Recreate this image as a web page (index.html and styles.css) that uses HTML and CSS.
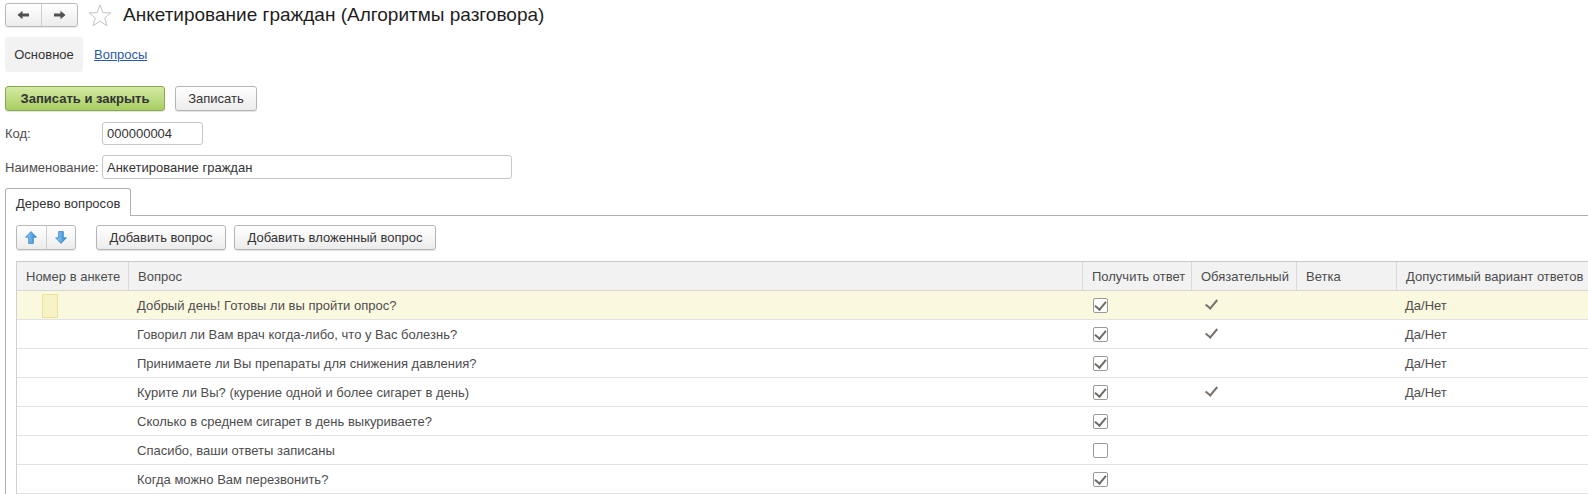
FILE: index.html
```html
<!DOCTYPE html>
<html lang="ru">
<head>
<meta charset="utf-8">
<title>Анкетирование граждан</title>
<link rel="stylesheet" href="styles.css">
</head>
<body>
<div class="page">
  <header class="titlebar">
    <div class="navgroup">
      <button class="navbtn" type="button">
        <svg width="13" height="10" viewBox="0 0 13 10"><path d="M0.5 5 L5.5 0.8 L5.5 3.6 L12 3.6 L12 6.4 L5.5 6.4 L5.5 9.2 Z" fill="#505050"/></svg>
      </button>
      <button class="navbtn" type="button">
        <svg width="13" height="10" viewBox="0 0 13 10"><path d="M12.5 5 L7.5 0.8 L7.5 3.6 L1 3.6 L1 6.4 L7.5 6.4 L7.5 9.2 Z" fill="#505050"/></svg>
      </button>
    </div>
    <svg class="star" width="24" height="23" viewBox="0 0 24 23"><polygon points="12,1 14.9,8.6 23,8.9 16.6,13.9 18.9,21.8 12,17.2 5.1,21.8 7.4,13.9 1,8.9 9.1,8.6" fill="#fff" stroke="#c4c4c4" stroke-width="1"/></svg>
    <h1 class="title">Анкетирование граждан (Алгоритмы разговора)</h1>
  </header>

  <nav class="sections">
    <span class="section active">Основное</span>
    <a class="section link" href="#">Вопросы</a>
  </nav>

  <div class="commands">
    <button class="btn primary" type="button">Записать и закрыть</button>
    <button class="btn plain" type="button">Записать</button>
  </div>

  <div class="field code-field">
    <span class="label">Код:</span>
    <div class="input code">000000004</div>
  </div>
  <div class="field name-field">
    <span class="label">Наименование:</span>
    <div class="input name">Анкетирование граждан</div>
  </div>

  <div class="tabs">
    <div class="tab">Дерево вопросов</div>
    <div class="tab-rest"></div>
  </div>

  <div class="panel">
    <div class="toolbar">
      <div class="arrows">
        <button class="arrowbtn" type="button">
          <svg width="12" height="13" viewBox="0 0 12 13"><defs><linearGradient id="gu" x1="0" y1="0" x2="1" y2="0"><stop offset="0" stop-color="#9fd3f7"/><stop offset="1" stop-color="#2a84d4"/></linearGradient></defs><polygon points="6,0.6 11.4,6.2 8.3,6.2 8.3,12.4 3.7,12.4 3.7,6.2 0.6,6.2" fill="url(#gu)" stroke="#2f80c8" stroke-width="0.8"/></svg>
        </button>
        <button class="arrowbtn" type="button">
          <svg width="12" height="13" viewBox="0 0 12 13"><defs><linearGradient id="gd" x1="0" y1="0" x2="1" y2="0"><stop offset="0" stop-color="#9fd3f7"/><stop offset="1" stop-color="#2a84d4"/></linearGradient></defs><polygon points="6,12.4 11.4,6.8 8.3,6.8 8.3,0.6 3.7,0.6 3.7,6.8 0.6,6.8" fill="url(#gd)" stroke="#2f80c8" stroke-width="0.8"/></svg>
        </button>
      </div>
      <button class="btn plain add" type="button">Добавить вопрос</button>
      <button class="btn plain add-nested" type="button">Добавить вложенный вопрос</button>
    </div>

    <div class="grid">
      <div class="row head">
        <div class="cell c-num">Номер в анкете</div>
        <div class="cell c-q">Вопрос</div>
        <div class="cell c-get">Получить ответ</div>
        <div class="cell c-req">Обязательный</div>
        <div class="cell c-br">Ветка</div>
        <div class="cell c-ans">Допустимый вариант ответов</div>
      </div>

      <div class="row current">
        <div class="cell c-num"><span class="edit-box"></span></div>
        <div class="cell c-q">Добрый день! Готовы ли вы пройти опрос?</div>
        <div class="cell c-get"><span class="cb on"></span></div>
        <div class="cell c-req"><span class="tick"></span></div>
        <div class="cell c-br"></div>
        <div class="cell c-ans">Да/Нет</div>
      </div>
      <div class="row">
        <div class="cell c-num"></div>
        <div class="cell c-q">Говорил ли Вам врач когда-либо, что у Вас болезнь?</div>
        <div class="cell c-get"><span class="cb on"></span></div>
        <div class="cell c-req"><span class="tick"></span></div>
        <div class="cell c-br"></div>
        <div class="cell c-ans">Да/Нет</div>
      </div>
      <div class="row">
        <div class="cell c-num"></div>
        <div class="cell c-q">Принимаете ли Вы препараты для снижения давления?</div>
        <div class="cell c-get"><span class="cb on"></span></div>
        <div class="cell c-req"></div>
        <div class="cell c-br"></div>
        <div class="cell c-ans">Да/Нет</div>
      </div>
      <div class="row">
        <div class="cell c-num"></div>
        <div class="cell c-q">Курите ли Вы? (курение одной и более сигарет в день)</div>
        <div class="cell c-get"><span class="cb on"></span></div>
        <div class="cell c-req"><span class="tick"></span></div>
        <div class="cell c-br"></div>
        <div class="cell c-ans">Да/Нет</div>
      </div>
      <div class="row">
        <div class="cell c-num"></div>
        <div class="cell c-q">Сколько в среднем сигарет в день выкуриваете?</div>
        <div class="cell c-get"><span class="cb on"></span></div>
        <div class="cell c-req"></div>
        <div class="cell c-br"></div>
        <div class="cell c-ans"></div>
      </div>
      <div class="row">
        <div class="cell c-num"></div>
        <div class="cell c-q">Спасибо, ваши ответы записаны</div>
        <div class="cell c-get"><span class="cb"></span></div>
        <div class="cell c-req"></div>
        <div class="cell c-br"></div>
        <div class="cell c-ans"></div>
      </div>
      <div class="row">
        <div class="cell c-num"></div>
        <div class="cell c-q">Когда можно Вам перезвонить?</div>
        <div class="cell c-get"><span class="cb on"></span></div>
        <div class="cell c-req"></div>
        <div class="cell c-br"></div>
        <div class="cell c-ans"></div>
      </div>
    </div>
  </div>
</div>
</body>
</html>
```

FILE: styles.css
```css
* { box-sizing: border-box; }

html, body {
  margin: 0;
  padding: 0;
  background: #fff;
  overflow: hidden;
}

body {
  font-family: "Liberation Sans", Arial, sans-serif;
  font-size: 13px;
  color: #4d4d4d;
}

.page {
  padding: 3px 0 0 5px;
  width: 1620px;
}

/* title bar */
.titlebar {
  display: flex;
  align-items: center;
  height: 24px;
}

.navgroup {
  display: flex;
  width: 73px;
  height: 24px;
  border: 1px solid #b9b9b9;
  border-radius: 3px;
  background: linear-gradient(#ffffff, #ececec);
  box-shadow: 0 1px 1px rgba(0,0,0,0.08);
  overflow: hidden;
}

.navbtn {
  flex: 1;
  border: 0;
  background: transparent;
  padding: 0;
  display: flex;
  align-items: center;
  justify-content: center;
}

.navbtn + .navbtn { border-left: 1px solid #cfcfcf; }

.star {
  margin-left: 10px;
  margin-top: 1px;
}

.title {
  margin: 0 0 0 11px;
  font-weight: normal;
  font-size: 19px;
  color: #1e1e1e;
  line-height: 24px;
}

/* sections */
.sections {
  display: flex;
  align-items: center;
  margin-top: 10px;
  height: 35px;
}

.section {
  font-size: 13px;
  color: #333;
}

.section.active {
  display: flex;
  align-items: center;
  height: 35px;
  width: 78px;
  justify-content: center;
  background: #f2f2f2;
  border-radius: 3px;
}

.section.link {
  margin-left: 11px;
  color: #2c5aa6;
  text-decoration: underline;
}

/* command bar */
.commands {
  display: flex;
  gap: 10px;
  margin-top: 14px;
}

.btn {
  flex-shrink: 0;
  height: 25px;
  font-family: "Liberation Sans", Arial, sans-serif;
  font-size: 13px;
  color: #333;
  border: 1px solid #b5b5b5;
  border-radius: 3px;
  background: linear-gradient(#ffffff, #ececec);
  box-shadow: 0 1px 1px rgba(0,0,0,0.12);
  padding: 0 12px;
}

.btn.primary {
  width: 160px;
  font-weight: bold;
  color: #333;
  border-color: #8aaa4c;
  background: linear-gradient(#d5e9a3, #a8cf63);
}

.btn.plain { width: 82px; }

/* fields */
.field {
  display: flex;
  align-items: center;
}

.code-field { margin-top: 11px; }
.name-field { margin-top: 10px; }

.label {
  width: 97px;
  color: #4d4d4d;
}

.input {
  display: flex;
  align-items: center;
  border: 1px solid #c6c6c6;
  border-radius: 3px;
  padding: 0 4px;
  color: #333;
  background: #fff;
}

.input.code { width: 101px; height: 23px; }
.input.name { width: 410px; height: 24px; }

/* tabs */
.tabs {
  display: flex;
  margin-top: 9px;
  align-items: flex-end;
}

.tab {
  flex-shrink: 0;
  width: 126px;
  height: 28px;
  border: 1px solid #b0b0b0;
  border-bottom: 0;
  border-radius: 3px 3px 0 0;
  padding: 7px 0 0 10px;
  color: #333;
  background: #fff;
}

.tab-rest {
  flex: 1;
  border-bottom: 1px solid #b0b0b0;
}

.panel {
  border-left: 1px solid #b0b0b0;
  padding: 9px 0 0 10px;
  height: 300px;
}

/* toolbar */
.toolbar {
  display: flex;
  height: 25px;
  gap: 8px;
}

.arrows {
  flex-shrink: 0;
  display: flex;
  width: 60px;
  height: 25px;
  border: 1px solid #b9b9b9;
  border-radius: 3px;
  background: linear-gradient(#ffffff, #ececec);
  box-shadow: 0 1px 1px rgba(0,0,0,0.1);
  overflow: hidden;
  margin-right: 12px;
}

.arrowbtn {
  flex: 1;
  border: 0;
  padding: 0;
  background: transparent;
  display: flex;
  align-items: center;
  justify-content: center;
}

.arrowbtn + .arrowbtn { border-left: 1px solid #cfcfcf; }

.btn.add { width: 130px; }
.btn.add-nested { width: 202px; }

/* grid */
.grid {
  margin-top: 11px;
  border-left: 1px solid #d0d0d0;
  border-top: 1px solid #c8c8c8;
  width: 1600px;
}

.row {
  display: flex;
  height: 29px;
  border-bottom: 1px solid #e2e2e2;
}

.row.head {
  height: 29px;
  background: #f2f2f2;
  border-bottom: 1px solid #d6d6d6;
}

.row.current { background: #fbf8e0; }

.cell {
  flex-shrink: 0;
  display: flex;
  align-items: center;
  padding-left: 9px;
  color: #4d4d4d;
  white-space: nowrap;
}

.row.head .cell + .cell { border-left: 1px solid #d9d9d9; }

.c-num { width: 111px; }
.c-q { width: 954px; }
.c-get { width: 109px; padding-left: 11px; }
.c-req { width: 105px; padding-left: 13px; }
.c-br { width: 100px; }
.c-ans { width: 220px; }

.row.head .c-get { padding-left: 9px; }
.row.head .c-req { padding-left: 9px; }

.edit-box {
  display: block;
  width: 16px;
  height: 24px;
  margin-left: 16px;
  margin-top: 2px;
  border: 1px solid #ebe39a;
  background: #f7f3c6;
}

.cb {
  position: relative;
  display: block;
  width: 15px;
  height: 15px;
  border: 1px solid #9a9a9a;
  border-radius: 2px;
  background: #fff;
}

.cb.on::after {
  content: "";
  position: absolute;
  left: 3px;
  top: 0px;
  width: 5px;
  height: 9px;
  border-right: 2px solid #6f6a66;
  border-bottom: 2px solid #6f6a66;
  transform: rotate(40deg);
}

.tick {
  position: relative;
  display: block;
  width: 14px;
  height: 14px;
}

.tick::after {
  content: "";
  position: absolute;
  left: 4px;
  top: -1px;
  width: 5px;
  height: 10px;
  border-right: 2px solid #7a716c;
  border-bottom: 2px solid #7a716c;
  transform: rotate(40deg);
}
```
